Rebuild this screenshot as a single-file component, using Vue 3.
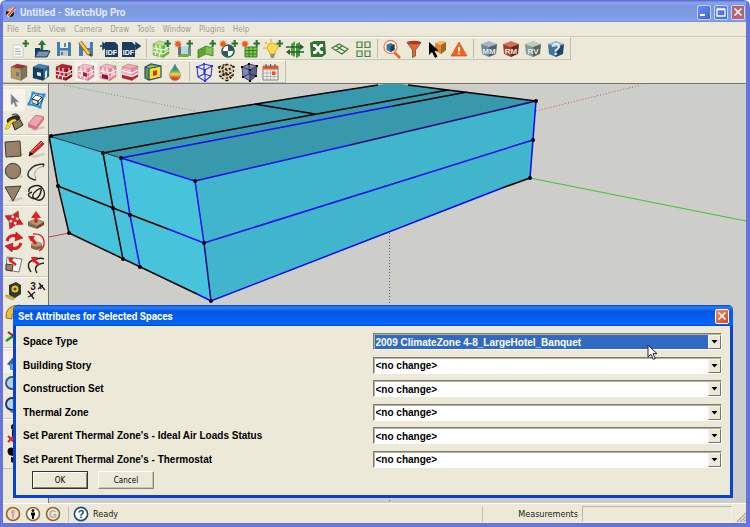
<template>
  <div class="window">
    <header class="titlebar">
      <svg class="titlebar__icon" viewBox="0 0 12 12" v-html="logo"></svg>
      <span class="titlebar__text">Untitled - SketchUp Pro</span>
      <button class="caption" aria-label="Minimize">
        <svg viewBox="0 0 12 12"><path d="M2 9h5" stroke="#fff" stroke-width="2" /></svg>
      </button>
      <button class="caption" aria-label="Maximize">
        <svg viewBox="0 0 12 12"><path d="M2 3.5h8v6.5h-8zM2 3h8" fill="none" stroke="#fff" stroke-width="1.3" /></svg>
      </button>
      <button class="caption caption--close" aria-label="Close">
        <svg viewBox="0 0 12 12"><path d="M2.5 2.5l7 7M9.5 2.5l-7 7" stroke="#fff" stroke-width="1.7" /></svg>
      </button>
    </header>

    <nav class="menu">
      <button v-for="item in menu" :key="item" class="menu__item">{{ item }}</button>
    </nav>

    <div
      v-for="(bar, index) in toolbars"
      :key="index"
      class="toolbar"
      :class="{ 'toolbar--short': index === 1 }"
    >
      <div
        v-for="(group, g) in bar"
        :key="g"
        class="toolbar__group"
        :style="{ flexGrow: group.length }"
      >
        <button
          v-for="name in group"
          :key="name"
          class="tool"
          :class="{ 'tool--active': name === 'surfaceType' }"
          :aria-label="name"
        >
          <svg viewBox="0 0 20 20" v-html="icons[name]"></svg>
        </button>
      </div>
    </div>

    <main class="workspace">
      <aside class="palette">
        <div v-for="(group, g) in palette" :key="g" class="palette__group">
          <button
            v-for="name in group"
            :key="name"
            class="tool"
            :class="{ 'tool--active': name === 'select' || name === 'orbit' }"
            :aria-label="name"
          >
            <svg viewBox="0 0 20 20" v-html="icons[name]"></svg>
          </button>
        </div>
      </aside>

      <svg class="viewport" viewBox="49 84 697 419" preserveAspectRatio="xMinYMin slice">
        <g fill="none">
          <path d="M64 85L195 111" stroke="#5fae5f" stroke-dasharray="1 2" />
          <path d="M536 111L641 85" stroke="#c06060" stroke-dasharray="1 2" />
          <path d="M389.5 233V503" stroke="#5555b5" stroke-dasharray="1 2" />
          <path d="M530 178L746 221" stroke="#3fbf3f" />
          <path d="M49 237L69 233" stroke="#c83c3c" />
        </g>
        <path d="M49 136L378 85L392 83L408 85L536 101L195 181Z" fill="#3999ac" />
        <path d="M49 136L195 181L211 301L69 233Z" fill="#47c4dc" />
        <path d="M195 181L536 101L530 178L211 301Z" fill="#41b5cc" />
        <g fill="none" stroke="#000" stroke-width="1.5">
          <path d="M49 136L378 85M408 85L536 101M254 104L315 114M103 153L448 90M393 106L467 92" />
          <path d="M49 136L58 186L69 233L197 294M58 186L113 208L168 229M103 153L113 208L123 259" />
          <path d="M502 188L530 178" />
          <path d="M49 136L121 158" stroke="#234" stroke-width="1" />
        </g>
        <g fill="none" stroke="#0a0aee" stroke-width="1.5">
          <path d="M393 106L121 158L195 181L204 243M121 158L130 215L140 267" />
          <path d="M195 181L350 145M168 229L204 243L533 140M536 101L530 178" />
          <path d="M197 294L211 301L502 188" />
          <path d="M350 145L536 101M204 243L211 301" stroke="#06067c" />
        </g>
        <circle v-for="(p, i) in vertices" :key="i" :cx="p[0]" :cy="p[1]" r="2" />
      </svg>
    </main>

    <footer class="status">
      <button v-for="name in ['geo', 'credits', 'claim']" :key="name" class="status__icon" :aria-label="name">
        <svg viewBox="0 0 16 16" v-html="icons[name]"></svg>
      </button>
      <span class="status__line"></span>
      <button class="status__icon" aria-label="Help">
        <svg viewBox="0 0 16 16" v-html="icons.statusHelp"></svg>
      </button>
      <span class="status__text">Ready</span>
      <label class="status__measure">
        Measurements
        <input type="text" class="status__input" />
      </label>
      <svg class="status__grip" viewBox="0 0 12 12">
        <path d="M1 12L12 1M5 12L12 5M9 12L12 9" stroke="#aaa794" stroke-width="1.4" />
      </svg>
    </footer>

    <section class="dialog" role="dialog" aria-labelledby="dialog-title">
      <header class="dialog__title">
        <span id="dialog-title">Set Attributes for Selected Spaces</span>
        <button class="caption caption--red" aria-label="Close dialog">
          <svg viewBox="0 0 12 12"><path d="M2.5 2.5l7 7M9.5 2.5l-7 7" stroke="#fff" stroke-width="1.7" /></svg>
        </button>
      </header>
      <form class="dialog__body" @submit.prevent>
        <div v-for="(field, index) in fields" :key="field.label" class="field">
          <label :for="'field-' + index" class="field__label">{{ field.label }}</label>
          <div class="field__box">
            <select
              :id="'field-' + index"
              v-model="field.value"
              class="field__select"
              :class="{ 'field__select--focus': index === 0 }"
            >
              <option v-for="option in field.options" :key="option">{{ option }}</option>
            </select>
            <span class="field__arrow">
              <svg viewBox="0 0 7 4"><path d="M0.5 0h6L3.5 3.5z" /></svg>
            </span>
          </div>
        </div>
        <div class="dialog__buttons">
          <button class="push push--default" type="submit">OK</button>
          <button class="push" type="button">Cancel</button>
        </div>
      </form>
      <svg class="pointer" viewBox="0 0 11 17">
        <path d="M1 1v12l3-2.7 2.2 5 2-.9-2.2-4.7h4z" fill="#fff" stroke="#222" />
      </svg>
    </section>
  </div>
</template>

<script setup>
import { ref } from 'vue'

const menu = ['File', 'Edit', 'View', 'Camera', 'Draw', 'Tools', 'Window', 'Plugins', 'Help']

const toolbars = [
  [
    ['newFile', 'openFile', 'save', 'saveAs', 'importIdf', 'exportIdf'],
    ['newSpace', 'newShading', 'newPartition', 'newDaylight', 'newPhotovoltaic', 'newLight', 'matching', 'diagram', 'project', 'grid'],
    ['inspect', 'filter', 'pick', 'warnings'],
    ['modelMaker', 'runManager', 'resultsViewer', 'help']
  ],
  [
    ['renderNormal', 'renderDefault', 'boundary', 'surfaceType', 'construction', 'story', 'thermalZone', 'dataColor'],
    ['wireframe', 'hidden', 'shaded', 'calendar']
  ]
]

const palette = [
  ['select', 'component', 'paint', 'eraser'],
  ['rectangle', 'line', 'circle', 'arc', 'polygon', 'freehand'],
  ['move', 'pushPull', 'rotate', 'followMe', 'scale', 'offset'],
  ['tape', 'dimension', 'protractor', 'text', 'axes', 'text3d'],
  ['orbit', 'pan', 'zoom', 'zoomWindow', 'previous', 'next'],
  ['camera', 'look', 'walk', 'section']
]

const noChange = '<no change>'
const banquet = '2009 ClimateZone 4-8_LargeHotel_Banquet'

const fields = ref([
  { label: 'Space Type', value: banquet, options: [noChange, banquet] },
  { label: 'Building Story', value: noChange, options: [noChange] },
  { label: 'Construction Set', value: noChange, options: [noChange] },
  { label: 'Thermal Zone', value: noChange, options: [noChange] },
  { label: "Set Parent Thermal Zone's - Ideal Air Loads Status", value: noChange, options: [noChange] },
  { label: "Set Parent Thermal Zone's - Thermostat", value: noChange, options: [noChange] }
])

const vertices = [
  [51, 136], [58, 186], [69, 233], [103, 153], [113, 208], [123, 259], [121, 158], [130, 215],
  [140, 267], [195, 181], [204, 243], [211, 301], [536, 101], [533, 140], [530, 178]
]

const plus = '<path d="M13.5 4.5h6.5M16.7 1v7" stroke="#2c7434" stroke-width="2.1"/>'
const sun = '<path d="M5 1v8M1 5h8M2 2l6 6M8 2l-6 6" stroke="#f0a070" stroke-width="1"/><circle cx="5" cy="5" r="2.7" fill="#ee5a1c"/>'

function mark(x, y, size, text, fill = '#fff') {
  return `<text x="${x}" y="${y}" font-size="${size}" font-weight="bold" font-family="Liberation Sans, sans-serif" text-anchor="middle" fill="${fill}">${text}</text>`
}

function cube(top, front, side, extra = '') {
  return `<path d="M2 5L8 2L18 4L12 7Z" fill="${top}"/><path d="M2 5L12 7V18.5L2 16Z" fill="${front}"/><path d="M12 7L18 4V14.5L12 18.5Z" fill="${side}"/><path d="M2 5L8 2L18 4V14.5L12 18.5L2 16ZM2 5L12 7L18 4M12 7V18.5" fill="none" stroke="#0004" stroke-width=".7"/>${extra}`
}

// square cube seen from its corner, used by the OpenStudio buttons
function block(top, left, right, label, size = 8) {
  return `<path d="M2 5L10 2L18 5L10 8Z" fill="${top}"/><path d="M2 5L10 8V18L3 15Z" fill="${left}"/><path d="M18 5L10 8V18L17 15Z" fill="${right}"/>${mark(10, size > 8 ? 16 : 15, size, label, '#e6ecec')}`
}

const brick = '<path d="M2 9l10 2 6-3M2 12.5l10 2.5 6-3.5M5 5.5v3.5M9 6v4M6 10v3.5M10 11v3M4.5 13v3M8.5 14v3.5M15 6v3.5M14 10v4M16 9v3" stroke="#fff" stroke-width="1" fill="none"/>'
const frame = 'M3 5L10 2L18 4L11 8ZM3 5L4 15L11 19V8M11 19L17 14L18 4M4 15L10 12L17 14M10 12V2'
const shadow = '<path d="M4 17L18 14L19 16L8 19Z" fill="#0002"/>'

const logo = '<circle cx="5" cy="7" r="4" fill="#191919"/><path d="M1 5L4 2L8 3L6 6Z" fill="#f5a06d"/><path d="M2.5 10.5L9.5 2" stroke="#fff" stroke-width="3"/><path d="M3 10L10 1.5" stroke="#e34326" stroke-width="1.8"/>'

const icons = {
  newFile: '<path d="M4 6h7l3 3v9H4z" fill="#f8f8f6" stroke="#c2c2be" stroke-width=".8"/><path d="M6 10h5M6 12.5h6M6 15h6" stroke="#999" stroke-width=".8"/>' + plus,
  openFile: '<path d="M3 9h5l1 2h7v6H3z" fill="#123d63"/><path d="M3 18l3-6h12l-3 6z" fill="#7691ab" stroke="#123d63"/><path d="M10 11V5" stroke="#2c7434" stroke-width="2.5"/><path d="M6 6l4-5 4 5z" fill="#2c7434"/>',
  save: '<path d="M3 3h13l1 1v13H3z" fill="#467eaa"/><path d="M6 3h8v6H6z" fill="#e4edf3"/><path d="M6 11.5h8V17H6z" fill="#c3cdd3"/><path d="M11 4v4M8 13v3" stroke="#345" stroke-width="1.3"/>',
  saveAs: '<path d="M3 3h14v14H3z" fill="#467eaa"/><path d="M7 3h7v6H7zM7 11.5h7V17H7z" fill="#d7e3eb"/><path d="M4 3l9 12" stroke="#9a5a14" stroke-width="4"/><path d="M4 3l9 12" stroke="#f9c83b" stroke-width="2.7"/><path d="M12 16l3-2 1 4z" fill="#533"/>',
  importIdf: '<path d="M6 3h10l3 3v12H6z" fill="#193d60"/><path d="M1 7h5M4 4l4 3-4 3z" fill="#193d60" stroke="#193d60" stroke-width="1.5"/>' + mark(12.5, 16, 7, 'IDF'),
  exportIdf: '<path d="M1 3h10l3 3v12H1z" fill="#193d60"/><path d="M11 7h5M15 4l4 3-4 3z" fill="#193d60" stroke="#193d60" stroke-width="1.5"/>' + mark(7.5, 16, 7, 'IDF'),
  newSpace: cube('#b5e48c', '#8ed35a', '#6cbc3b', brick) + plus,
  newShading: '<path d="M8 7h9v10H8z" fill="#b9d9dd"/><path d="M5 8l3-2v12l-3-2z" fill="#5f7077"/><path d="M15 8h3v9h-3z" fill="#6b8d95"/><path d="M5 17l3-2h10l-3 3H5z" fill="#6ab43a"/>' + sun + plus,
  newPartition: '<path d="M2 11l8-4v8l-8 4z" fill="#5da632"/><path d="M10 7l7 2v8l-7-2z" fill="#82c44d"/><path d="M2 11l8-4 7 2v8l-7-2-8 4z" fill="none" stroke="#3a7d27" stroke-width=".8"/>' + plus,
  newDaylight: '<circle cx="10" cy="12" r="6" fill="#fff" stroke="#285e55" stroke-width="1.6"/><path d="M10 12V6a6 6 0 0 1 6 6zM10 12v6a6 6 0 0 1-6-6z" fill="#285e55"/>' + sun + plus,
  newPhotovoltaic: '<path d="M5 8h12v10H5z" fill="#7cc94a"/><path d="M5 8h12v10H5zM9 8v10M13 8v10M5 11.5h12M5 15h12" fill="none" stroke="#32742b" stroke-width=".9"/>' + sun + plus,
  newLight: '<path d="M8 0v3M2 3l2 2M0 9h3" stroke="#f2b632" stroke-width="1.5"/><path d="M7 15q0-2-2-4t0-5 7-1 2 5-2 5z" fill="#ffe04a" stroke="#e29d19"/><path d="M7 15h5l-1 4H8z" fill="#8b9399"/>' + plus,
  matching: '<path d="M6 5l4-3v16l-4-2z" fill="#54a437"/><path d="M11 5l4-2v14l-4 2z" fill="#3f9440"/><path d="M1 8h15M4 13h15" stroke="#265f36" stroke-width="1.4"/><path d="M15 5l4 3-4 3zM5 10l-4 3 4 3z" fill="#265f36"/>',
  diagram: '<path d="M2 4l4-2h11l1 13-4 3H3z" fill="#2d7433"/><path d="M7 6l6 8M13 6l-6 8" stroke="#fff" stroke-width="2.6"/><path d="M5 5h3v3H5zM12 5h3v3h-3zM5 12h3v3H5zM12 12h3v3h-3z" fill="#fff"/>',
  project: '<path d="M2 9l7-4 9 5-6 5zM6 11.5l6-4.5M6 7l9 5.5" fill="none" stroke="#3d7b3d" stroke-width="1.3"/>',
  grid: '<path d="M4 3h5v5.5H4zM12 3h5v5.5h-5zM4 12h5v5.5H4zM12 12h5v5.5h-5z" fill="#e2e9d3" stroke="#4b7f43" stroke-width="1.2"/>',
  inspect: '<path d="M12 13l6 6" stroke="#ee6523" stroke-width="2.5"/><circle cx="8.5" cy="8" r="6.5" fill="#fff" stroke="#ec8252" stroke-width="1.3"/><path d="M4.5 5.5L8.5 4l4 1.5V11l-4 2-4-2z" fill="#3d7597"/><path d="M8.5 7.5l4-2V11l-4 2z" fill="#153e5d"/>',
  filter: '<path d="M3 3.5l5.5 7.5v7.5l3-1.5v-6L17 3.5z" fill="#ed6528" stroke="#6b5449" stroke-width=".8"/><ellipse cx="10" cy="3.5" rx="7" ry="1.7" fill="#a13d24"/>',
  pick: '<path d="M8 4l6-2 5 1v8l-5 4-6-3z" fill="#d98a34"/><path d="M8 4l6-2 5 1-5 3z" fill="#f1bd71"/><path d="M14 6l5-3v8l-5 4z" fill="#a8651f"/><path d="M2 3v13l3-3 3 6 2.5-1.5-3-5.5 4-.5z" fill="#000"/>',
  warnings: '<path d="M10 3l8 14H2z" fill="#f06522" stroke="#c64c16" stroke-width=".6"/><path d="M10 8v4.5M10 13.8v1.7" stroke="#fff" stroke-width="1.8"/>',
  modelMaker: block('#a7b5c4', '#71849a', '#4b5f77', 'MM'),
  runManager: block('#cf7358', '#a83c27', '#74251a', 'RM'),
  resultsViewer: block('#c0cbbf', '#889a8b', '#56675d', 'RV'),
  help: block('#8eb8cf', '#3d7699', '#1d4a6b', '?', 16),
  renderNormal: cube('#9b3440', '#b69a62', '#92733f', '<path d="M7 10l3 .6v4l-3-.7zM14 9l2-1v8l-2 1.3z" fill="#5d7b91"/>'),
  renderDefault: cube('#3d83ac', '#143f64', '#2a6991', '<path d="M6 10l4 .8v3.5l-4-.8zM14 9.500l2-1.3v7l-2 1.5z" fill="#e8eef2"/>'),
  boundary: cube('#bc1f2d', '#c01827', '#8d111d', brick),
  surfaceType: cube('#f8bdc8', '#f5a6b4', '#f18294', brick + '<path d="M7 10l4 1v4l-4-1z" fill="#a72035"/>'),
  construction: cube('#f8b4c0', '#f6a4b4', '#ee8b9c', brick + '<path d="M4 12l6 1.5v4L4 16z" fill="#971126"/>'),
  story: cube('#f6a6b5', '#f7b2be', '#ef8fa0', '<path d="M2 12.5l10 2 6-2V14.5l-6 4L2 16z" fill="#c31f34"/><path d="M2 8.5l10 2.5 6-3M2 12l10 2.5 6-3" stroke="#fff" stroke-width="1.2" fill="none"/>'),
  thermalZone: '<path d="M2 5l6-3 10 2-5 3z" fill="#8cbf3a"/><path d="M2 5l4 1.5V18l-4-2z" fill="#5aa33a"/><path d="M6 6.5L18 4v11L6 18z" fill="#f5e02c"/><path d="M10 9l4-1v5l-4 1z" fill="#db322a"/><path d="M2 5l6-3 10 2v11L6 18l-4-2zM2 5l4 1.5L18 4M6 6.5V18" fill="none" stroke="#294a82" stroke-width="1.2"/>',
  dataColor: '<defs><linearGradient id="drop" x2="0" y2="1"><stop offset=".1" stop-color="#246dbd"/><stop offset=".4" stop-color="#43a867"/><stop offset=".62" stop-color="#f1dc3d"/><stop offset=".85" stop-color="#e34426"/></linearGradient></defs><path d="M10 2C11 6 15.500 9 15.500 13A5.500 5.500 0 0 1 4.500 13C4.500 9 9 6 10 2Z" fill="url(#drop)" stroke="#678" stroke-width=".5"/>',
  wireframe: `<path d="${frame}" fill="none" stroke="#2a31f3" stroke-width="1.1"/><path d="M2 4h2v2H2zM9 1h2v2H9zM17 3h2v2h-2zM10 7h2v2h-2zM10 18h2v2h-2z" fill="#2a31f3"/>`,
  hidden: `<path d="M3 5L10 2l8 2-1 10-6 5-7-4z" fill="#e8c9a8"/><path d="${frame}M3 9l8 4 7-4M7 4v12M14 6v10" fill="none" stroke="#171717" stroke-width="1.3" stroke-dasharray="2 2"/>`,
  shaded: `<path d="M3 5L10 2l8 2-1 10-6 5-7-4z" fill="#8288b8"/><path d="M11 8l7-4-1 10-6 5z" fill="#5a608c"/><path d="${frame}" fill="none" stroke="#222743" stroke-width=".8"/><path d="M2 4h2v2H2zM9 1h2v2H9zM17 3h2v2h-2zM10 7h2v2h-2zM3 14h2v2H3zM10 18h2v2h-2zM16 13h2v2h-2z"/>`,
  calendar: '<path d="M2 4h15v14H2z" fill="#eee" stroke="#7e8287"/><path d="M2 4h15v3.5H2z" fill="#e85b2b"/><path d="M5 2v4M9.5 2v4M14 2v4" stroke="#666" stroke-width="1.2"/><path d="M2.5 11h14M2.5 14.5h14M6 8v10M9.5 8v10M13 8v10" stroke="#a6a9ad" stroke-width=".8"/><path d="M11 9.5h3.5V13H11z" fill="#ee551d"/>',

  select: '<path d="M7 4v11l2.6-2.4 2 4.4 1.8-.8-2-4.2h3.5z" fill="#7c7f83" stroke="#b7b7b2" stroke-width=".6"/>',
  component: '<path d="M7 3l11 2-4 12-11-3z" fill="#fff" stroke="#2990dd" stroke-width="2"/><path d="M6 9l4-4 6 2-4 4z" fill="#fff" stroke="#222" stroke-width=".8"/><path d="M6 9l6 2v4l-6-2zM12 11l4-4v3l-4 5z" fill="#d9e3ea" stroke="#222" stroke-width=".8"/><path d="M5.500 1.500h3v3h-3zM16.500 3.500h3v3h-3zM12.500 15.500h3v3h-3zM1.500 12.500h3v3h-3z" fill="#2990dd"/>',
  paint: '<path d="M8 10l6-6 5 9-8 5z" fill="#8e7a57" stroke="#222"/><ellipse cx="9" cy="7.5" rx="6" ry="2.8" fill="#332d24" stroke="#111" transform="rotate(-22 9 7.5)"/><path d="M11 7q-7 0-10 10 4 1 5-3t7-5z" fill="#f4d827" stroke="#8a7a12" stroke-width=".5"/><path d="M8 3q5-3 8 3" fill="none" stroke="#333" stroke-width="1.2"/>',
  eraser: shadow + '<path d="M2 12l8-9 8 2-8 10z" fill="#f3a2b3" stroke="#b8566b" stroke-width=".7"/><path d="M2 12l8 3v3l-8-3zM10 15l8-10v3l-8 10z" fill="#db6f87"/>',
  rectangle: shadow + '<path d="M1 3l15-1 1 15-15 1z" fill="#968269" stroke="#463a2d"/>',
  circle: shadow + '<circle cx="9" cy="10" r="7.7" fill="#968269" stroke="#463a2d"/>',
  polygon: shadow + '<path d="M1 4l16-1-8 15z" fill="#968269" stroke="#463a2d"/>',
  line: shadow + '<path d="M3 17l1-4L15 2l3 3L7 15z" fill="#db2430" stroke="#641018" stroke-width=".7"/><path d="M3 17l1-4 3 2z" fill="#111"/><path d="M5 13L16 3" stroke="#ff8b8b" stroke-width="1"/>',
  arc: '<path d="M10 19Q-1 17 3 10T18 3M18 3l-1 3" fill="none" stroke="#333" stroke-width="1.5"/><path d="M10 18Q5 8 18 5" fill="none" stroke="#999" stroke-width=".9"/>',
  freehand: '<path d="M3 9Q2 5 8 3t9 3 0 9-8 1 1-8 5 0-4 7-7-1 2-5" fill="none" stroke="#222" stroke-width="1.4"/>',
  move: '<g transform="rotate(25 10 10)"><path d="M10 4v12M4 10h12" stroke="#df2027" stroke-width="2.2"/><path d="M10 0l3.5 6h-7zM10 20l3.5-6h-7zM0 10l6-3.500v7zM20 10l-6-3.500v7z" fill="#df2027" stroke="#7c1216" stroke-width=".4"/></g>',
  pushPull: '<path d="M2 12l8-3 8 3-7 4z" fill="#b79c78" stroke="#63513a" stroke-width=".6"/><path d="M2 12l9 4v3l-9-3z" fill="#826b4d"/><path d="M18 12l-7 4v3l7-4z" fill="#5f4c35"/><path d="M10 13V7" stroke="#dd2027" stroke-width="3"/><path d="M5 8l5-7 5 7z" fill="#dd2027"/>',
  rotate: '<path d="M3 9Q5 2 13 4M17 11q-2 7-10 5" fill="none" stroke="#db2027" stroke-width="3"/><path d="M12 0l7 6-8 3zM8 20l-7-6 8-3z" fill="#db2027" stroke="#7c1216" stroke-width=".5"/>',
  followMe: '<path d="M5 12h11v4q-5 4-11 0z" fill="#80684a"/><ellipse cx="10.5" cy="12" rx="5.5" ry="2.5" fill="#b79c78"/><path d="M7 2q12-1 11 11-1 4-5 6" fill="none" stroke="#db2027" stroke-width="1.3"/><path d="M10 12L6 7" stroke="#db2027" stroke-width="3"/><path d="M2 4l7 0-4 6z" fill="#db2027"/>',
  scale: '<path d="M3 3l15 2-3 13-13-2z" fill="#f4f3ef" stroke="#777"/><path d="M2 10l7 1-1 6-6-1z" fill="#968269" stroke="#463a2d"/><path d="M12 11L7 7" stroke="#db2027" stroke-width="2.5"/><path d="M4 4l6 0-4 5z" fill="#db2027"/>',
  offset: '<path d="M5 18Q-1 9 7 6T18 5M11 19Q6 11 18 9" fill="none" stroke="#222" stroke-width="1.4"/><path d="M13 11L8 6" stroke="#db2027" stroke-width="2.6"/><path d="M5 3l7 0-5 6z" fill="#db2027"/>',
  tape: '<path d="M5 4l7-3 5 3v9l-6 4-6-3z" fill="#343434"/><circle cx="11" cy="8" r="3.5" fill="#eac229"/><circle cx="11" cy="8" r="1.5" fill="#54491c"/><path d="M2 14l9 3-2 2-7-3z" fill="#eac229" stroke="#745c12" stroke-width=".5"/>',
  dimension: '<path d="M2 10l6 8M13 2l6 7M4 15l5-4M12 8l5-4M2 16l5-2M14 4l1 4" stroke="#222" stroke-width="1.3"/>' + mark(7, 9, 10, '3', '#222'),
  protractor: '<path d="M2 15Q1 2 16 2l2 6-4 1Q7 8 8 16z" fill="#efbd36" stroke="#95701b"/>',
  text: '<path d="M3 4h14v9H9l-5 4z" fill="#fff" stroke="#222"/>',
  axes: '<path d="M12 12V1" stroke="#273bd3" stroke-width="2"/><path d="M12 12l6 5" stroke="#db2027" stroke-width="2"/><path d="M12 9L2 16" stroke="#20922c" stroke-width="2.5"/><path d="M4 7l7 5" stroke="#8c1e1e" stroke-width="2"/>',
  text3d: '<path d="M3 15l7-11 7 11z" fill="#968269" stroke="#463a2d"/>',
  orbit: '<path d="M3 12l8-9v5l7 2-7 3v4z" fill="#3c6697"/><path d="M6 12h8v6H6z" fill="#4b9de8"/>',
  pan: '<path d="M4 10l3-6 7 2 2 9-6 3z" fill="#e9d9b8" stroke="#333"/>',
  zoom: '<circle cx="8" cy="9" r="6" fill="#a9d3ee" stroke="#39546e" stroke-width="1.8"/><path d="M12 14l5 4" stroke="#222" stroke-width="2.5"/>',
  zoomWindow: '<circle cx="8" cy="8" r="6" fill="#a9d3ee" stroke="#39546e" stroke-width="1.8"/><path d="M12 13l5 4" stroke="#222" stroke-width="2.5"/>',
  previous: '<circle cx="8" cy="8" r="6" fill="#a9d3ee" stroke="#203348" stroke-width="1.8"/><path d="M12 10v8l-6-2z" fill="#2c75c0"/>',
  next: '<circle cx="8" cy="8" r="6" fill="#a9d3ee" stroke="#203348" stroke-width="1.8"/>',
  camera: '<circle cx="10" cy="4" r="3"/><path d="M8 7h5v8H8z"/><path d="M4 13l6 6M10 13l-6 6" stroke="#db2027" stroke-width="2"/>',
  look: '<ellipse cx="10" cy="10" rx="7" ry="4" fill="#fff" stroke="#222"/>',
  walk: '<path d="M5 3q5-2 5 4l-1 4-4-1q-3-4 0-7zM7 12l4 1-1 5-3-1z"/><path d="M12 6q4-1 4 3l-1 4-3-1z"/>',
  section: '<path d="M3 5h13v11H3z" fill="none" stroke="#222"/>',

  geo: '<circle cx="8" cy="8" r="6.5" fill="#eee1cd" stroke="#97672b" stroke-width="1.6"/><circle cx="8" cy="6" r="2.2" fill="#e4a79c"/><path d="M8 8v4.5" stroke="#c18d82" stroke-width="1.3"/>',
  credits: '<circle cx="8" cy="8" r="6.5" fill="#fff" stroke="#97672b" stroke-width="1.6"/><circle cx="8" cy="4.6" r="1.4"/><path d="M6 6.5h4V9.5H9v3.5H7V9.5H6z"/>',
  claim: '<circle cx="8" cy="8" r="6.5" fill="#eee8db" stroke="#97672b" stroke-width="1.6"/>' + mark(8, 12, 10, 'G', '#b6ae9b'),
  statusHelp: '<circle cx="8" cy="8" r="6.6" fill="#fff" stroke="#1d4b74" stroke-width="1.6"/>' + mark(8, 12, 11, '?', '#1d3f60')
}
</script>

<style>
body {
  margin: 0;
  background: #fff;
}
</style>

<style scoped>
.window {
  position: relative;
  display: flex;
  flex-direction: column;
  height: 100vh;
  box-sizing: border-box;
  border: solid #6675dc;
  border-width: 0 4px 4px 3px;
  border-radius: 6px 6px 0 0;
  background: #ece9d8;
  font-family: "DejaVu Sans Condensed", "DejaVu Sans", sans-serif;
  font-size: 8px;
  overflow: hidden;
}

button {
  margin: 0;
  padding: 0;
  border: none;
  background: none;
  font: inherit;
}

svg {
  display: block;
}

.titlebar {
  display: flex;
  align-items: center;
  gap: 3px;
  height: 22px;
  flex: none;
  margin: 0 -3px;
  padding: 2px 4px 0 5px;
  box-sizing: border-box;
  background: linear-gradient(#5066cc, #8aa5ec 12%, #7b96e0 30%, #7d9ce6 75%, #83a5ec 90%, #7690dc);
}

.titlebar__icon {
  width: 12px;
  height: 12px;
}

.titlebar__text {
  flex: 1;
  color: #e3eafa;
  font: bold 10px Roboto, sans-serif;
}

.caption {
  width: 14px;
  height: 15px;
  box-sizing: border-box;
  border: 1px solid #c9d5f6;
  border-radius: 2px;
  background: linear-gradient(135deg, #6c8ff0, #3f63dc);
}

.caption svg {
  width: 12px;
  height: 12px;
}

.caption--close {
  background: #b4636f;
}

.caption--red {
  border-color: #fff;
  background: linear-gradient(135deg, #ee8a6c, #d8401c);
}

.menu {
  display: flex;
  align-items: center;
  gap: 8px;
  height: 14px;
  flex: none;
  padding: 0 4px;
  border-bottom: 1px solid #cbc8bb;
}

.menu__item {
  color: #a19d8e;
}

.toolbar {
  display: flex;
  height: 23px;
  width: 568px;
  flex: none;
  box-sizing: border-box;
  padding-left: 2px;
  border-top: 1px solid #fff;
  border-right: 1px solid #bfbcab;
  border-bottom: 1px solid #c9c6b6;
}

.toolbar--short {
  width: 283px;
}

.toolbar__group {
  display: flex;
  flex-basis: 0;
  margin: 1px 0;
  padding: 0 3px;
}

.toolbar__group + .toolbar__group {
  border-left: 1px solid #bfbcab;
}

.tool {
  display: flex;
  flex: 1;
  align-items: center;
  justify-content: center;
  min-width: 0;
}

.tool svg {
  width: 20px;
  height: 20px;
  flex: none;
}

.tool--active {
  background: #f7f4ed;
}

.workspace {
  display: flex;
  flex: 1;
  min-height: 0;
  border-top: 1px solid #77756b;
}

.palette {
  width: 46px;
  flex: none;
  box-sizing: border-box;
  padding-top: 2px;
  border-right: 1px solid #77756b;
}

.palette__group {
  display: grid;
  grid-template-columns: 22px 22px;
  grid-auto-rows: 22px;
  padding: 2px 0;
  border-top: 1px solid #fff;
  box-shadow: 0 -1px #cfccbc;
}

.palette__group:last-child {
  border-bottom: 1px solid #c9c6b6;
}

.viewport {
  flex: 1;
  min-width: 0;
  height: 100%;
  background: #cdcdc9;
}

.status {
  display: flex;
  align-items: center;
  height: 20px;
  flex: none;
  gap: 4px;
  padding-left: 2px;
  box-sizing: border-box;
  border-top: 1px solid #fff;
  font-size: 9px;
  color: #222;
}

.status__icon svg {
  width: 16px;
  height: 16px;
}

.status__line {
  width: 1px;
  height: 16px;
  margin-left: 3px;
  background: #c5c2b2;
}

.status__text {
  flex: 1;
}

.status__measure {
  display: flex;
  align-items: center;
  gap: 4px;
  height: 16px;
  padding-left: 35px;
  border-left: 1px solid #c5c2b2;
}

.status__input {
  width: 150px;
  height: 16px;
  box-sizing: border-box;
  border: 1px solid;
  border-color: #b8b5a5 #f4f2e8 #f4f2e8 #b8b5a5;
  background: #ece9d8;
  font: inherit;
}

.status__grip {
  width: 10px;
  height: 12px;
  align-self: flex-end;
}

.dialog {
  position: absolute;
  top: 305px;
  right: 13px;
  bottom: 25px;
  left: 10px;
  display: flex;
  flex-direction: column;
  box-sizing: border-box;
  border: solid #0842cf;
  border-width: 0 3px 3px;
  border-radius: 5px 5px 0 0;
  background: #ece9d8;
}

.dialog__title {
  display: flex;
  align-items: center;
  justify-content: space-between;
  height: 21px;
  flex: none;
  margin: 0 -3px;
  padding: 1px 4px 0 5px;
  box-sizing: border-box;
  border-radius: 5px 5px 0 0;
  background: linear-gradient(#0a4bc8, #2a7bf5 12%, #0657e4 30%, #0560f5 75%, #0667fb 90%, #0349c9);
  color: #fff;
  font: bold 10px Roboto, sans-serif;
}

.dialog__body {
  display: flex;
  flex: 1;
  flex-direction: column;
  min-height: 0;
  padding: 4px 8px 6px 7px;
}

.field {
  display: flex;
  flex: 1;
  align-items: center;
  font: bold 10px "Liberation Sans", Arial, sans-serif;
}

.field__label {
  flex: 1;
}

.field__box {
  display: flex;
  width: 50%;
  height: 17px;
  box-sizing: border-box;
  border: 1px solid;
  border-color: #7f7c6e #fff #fff #7f7c6e;
  background: #fff;
  box-shadow: inset 1px 1px #b4b1a2;
  padding: 1px 0 0 1px;
}

.field__select {
  flex: 1;
  min-width: 0;
  appearance: none;
  padding: 0 1px;
  border: none;
  border-radius: 0;
  outline: none;
  background: none;
  color: #000;
  font: inherit;
}

.field__select--focus {
  background: #316ac5;
  color: #fff;
}

.field__arrow {
  display: flex;
  align-items: center;
  justify-content: center;
  width: 13px;
  box-sizing: border-box;
  border: 1px solid;
  border-color: #f6f4ea #77756b #77756b #f6f4ea;
  background: #ece9d8;
  pointer-events: none;
}

.field__arrow svg {
  width: 7px;
  height: 4px;
}

.dialog__buttons {
  display: flex;
  gap: 10px;
  padding-left: 9px;
}

.push {
  width: 56px;
  height: 18px;
  box-sizing: border-box;
  border: 1px solid;
  border-color: #fff #8a8778 #8a8778 #fff;
  box-shadow: inset -1px -1px #c6c3b3;
}

.push--default {
  border-color: #333;
  box-shadow: inset 1px 1px #fff, inset -1px -1px #8a8778;
}

.pointer {
  position: absolute;
  top: 39px;
  left: 631px;
  width: 11px;
  height: 17px;
}
</style>
